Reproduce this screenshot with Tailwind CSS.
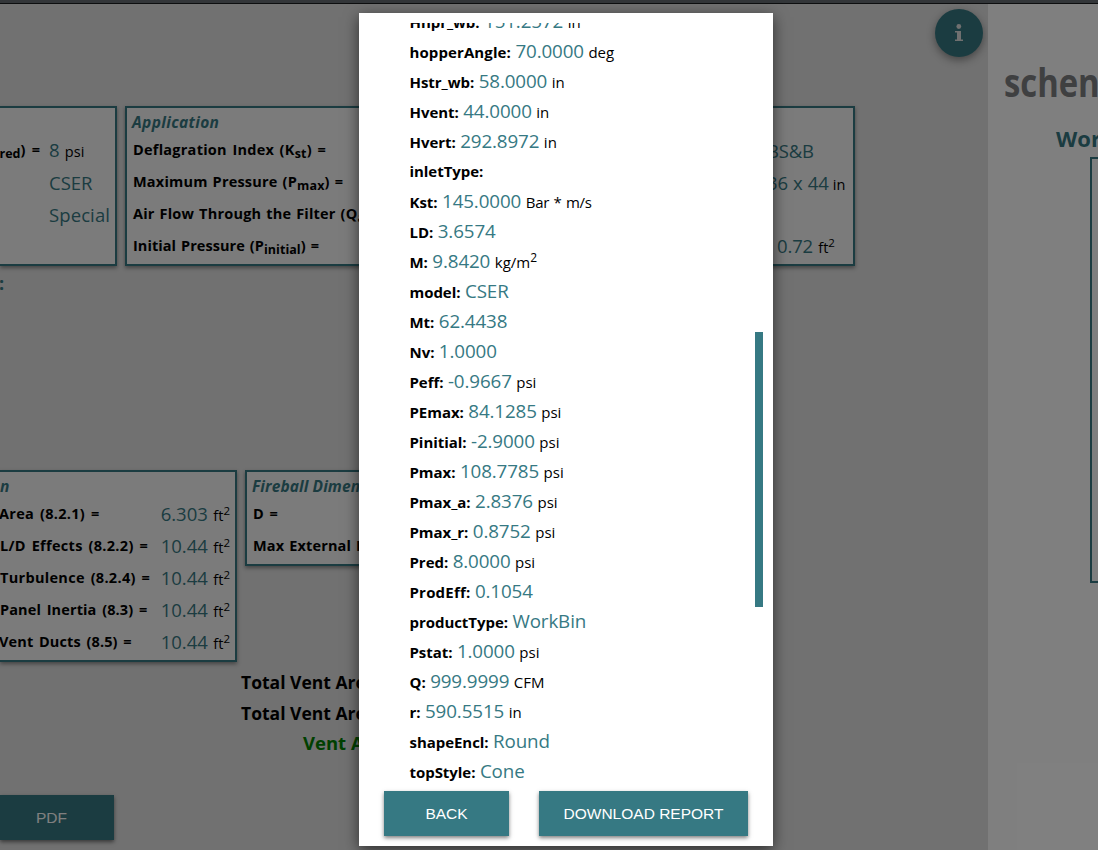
<!DOCTYPE html>
<html lang="en">
<head>
<meta charset="utf-8">
<title>Vent Report</title>
<script src="https://cdn.jsdelivr.net/npm/@tailwindcss/browser@4"></script>
</head>
<body class="relative h-[850px] w-[1098px] overflow-hidden bg-[#e2e2e2] font-['Open_Sans','Noto_Sans',sans-serif] text-black">
<div class="h-1 border-b border-[#1b1d1e] bg-[#666d73]"></div>
<div class="flex h-[846px]">
  <main class="relative w-[988px] shrink-0 overflow-hidden">
    <button class="absolute top-[5px] left-[935px] flex size-12 items-center justify-center rounded-full bg-[#367983] shadow-[0_3px_8px_rgba(0,0,0,0.4)]">
      <svg width="10" height="18" viewBox="0 0 10 18" fill="#e0e0e0"><circle cx="4.8" cy="2.5" r="2.4"/><path d="M1 7h6v8.600h2V17H1v-1.400h2V8.400H1z"/></svg>
    </button>
    <section class="flex gap-2 pt-[102px] text-[14.5px] font-bold whitespace-nowrap">
      <div class="flex h-40 w-[117px] shrink-0 justify-end border-2 border-l-0 border-[#367983] bg-[#f6f6f6] pr-1 pt-[26px] shadow-[0_2px_4px_rgba(0,0,0,0.4)]">
        <div class="mr-[9px] h-8 shrink-0 leading-8 [word-spacing:2.500px]">(P<sub class="text-[12.500px]">red</sub>) =</div>
        <div class="w-[62px] shrink-0 font-normal leading-8 *:h-8 [&_span]:text-[18.500px] [&_span]:text-[#367983]">
          <div class="[word-spacing:1.500px]"><span>8</span> psi</div>
          <div class="pt-px"><span>CSER</span></div>
          <div class="pt-px"><span class="tracking-[0.1px]">Special</span></div>
        </div>
      </div>
      <div class="h-40 w-[355px] shrink-0 border-2 border-[#367983] bg-[#f6f6f6] pl-[6px] shadow-[0_2px_4px_rgba(0,0,0,0.4)]">
        <h2 class="-ml-px h-[26px] text-[15.500px] leading-[29px] italic tracking-[0.350px] text-[#367983]">Application</h2>
        <div class="h-8 leading-8 tracking-[0.250px] [word-spacing:1.500px]">Deflagration Index (K<sub class="text-[12.500px]">st</sub>) =</div>
        <div class="h-8 leading-8 tracking-[0.200px] [word-spacing:1px]">Maximum Pressure (P<sub class="text-[12.500px]">max</sub>) =</div>
        <div class="h-8 leading-8 tracking-[0.200px] [word-spacing:1px]">Air Flow Through the Filter (Q<sub class="text-[12.500px]">air</sub>) =</div>
        <div class="h-8 leading-8 tracking-[0.050px] [word-spacing:1.200px]">Initial Pressure (P<sub class="text-[12.500px]">initial</sub>) =</div>
      </div>
      <div class="flex h-40 w-[367px] shrink-0 justify-end border-2 border-[#367983] bg-[#f6f6f6] pt-[26px] font-normal shadow-[0_2px_4px_rgba(0,0,0,0.4)]">
        <div class="w-[86px] leading-8 *:h-8 [&_span]:text-[18.500px] [&_span]:tracking-[-0.150px] [&_span]:text-[#367983]">
          <div class="pt-px"><span>BS&amp;B</span></div>
          <div class="pt-px [word-spacing:0.500px]"><span>36 x 44</span> in</div>
          <div></div>
          <div class="pl-[10px] [word-spacing:1.500px]"><span>0.72</span> ft<sup class="text-[11.500px]">2</sup></div>
        </div>
      </div>
    </section>
    <div class="-ml-px h-[204px] pt-1 text-[18px] font-bold text-[#367983]">:</div>
    <section class="flex h-[192px] items-start gap-2 text-[14.5px] font-bold whitespace-nowrap">
      <div class="h-48 w-[237px] shrink-0 border-2 border-l-0 border-[#367983] bg-[#f6f6f6] pr-[5px] shadow-[0_2px_4px_rgba(0,0,0,0.4)]">
        <h2 class="h-[26px] text-[15.500px] leading-[29px] italic text-[#367983]">n</h2>
        <div class="tracking-[0.300px] [word-spacing:1.800px] *:flex *:h-8 *:justify-between *:leading-8 [&_em]:font-normal [&_em]:not-italic [&_em]:tracking-normal [&_i]:text-[18.500px] [&_i]:text-[#367983] [&_i]:not-italic [&_sup]:text-[11.500px]">
          <div><span class="-ml-px">Area (8.2.1) =</span><em><i>6.303</i> ft<sup>2</sup></em></div>
          <div><span>L/D Effects (8.2.2) =</span><em><i>10.44</i> ft<sup>2</sup></em></div>
          <div><span>Turbulence (8.2.4) =</span><em><i>10.44</i> ft<sup>2</sup></em></div>
          <div><span class="tracking-[0.120px]">Panel Inertia (8.3) =</span><em><i>10.44</i> ft<sup>2</sup></em></div>
          <div><span class="-ml-px tracking-[0.120px]">Vent Ducts (8.5) =</span><em><i>10.44</i> ft<sup>2</sup></em></div>
        </div>
      </div>
      <div class="h-24 w-[355px] shrink-0 border-2 border-[#367983] bg-[#f6f6f6] pl-[6px] shadow-[0_2px_4px_rgba(0,0,0,0.4)]">
        <h2 class="-ml-px h-[26px] text-[15.500px] leading-[29px] italic tracking-[0.1px] text-[#367983]">Fireball Dimensions</h2>
        <div class="h-8 leading-8 [word-spacing:2px]">D =</div>
        <div class="h-8 leading-8 tracking-[0.150px] [word-spacing:1px]">Max External Pressure =</div>
      </div>
    </section>
    <section class="pt-[5px] pl-[241px] text-[17.500px] leading-[31px] font-bold whitespace-nowrap">
      <div>Total Vent Area Required =</div>
      <div>Total Vent Area Available =</div>
      <div class="-mt-px pl-[62px] text-[18.500px] leading-[29px] text-[green]">Vent Area OK</div>
    </section>
    <button class="mt-[38px] flex h-[45px] w-[114px] items-center bg-[#367983] pl-9 font-['Liberation_Sans',sans-serif] text-[15.500px] text-white shadow-[0_2px_4px_rgba(0,0,0,0.5)]">PDF</button>
  </main>
  <aside class="w-[110px] shrink-0 overflow-hidden bg-white whitespace-nowrap">
    <div class="mt-[53px] ml-[16px] h-[61px] origin-left scale-x-[0.82] text-[40px] leading-[50px] font-bold text-[#7e8083]">schenck</div>
    <div class="ml-[68px] h-[39px] text-[22px] leading-[40px] font-bold text-[#367983]">WorkBin</div>
    <div class="ml-[102px] h-[426px] w-40 border-2 border-[#367983]"></div>
  </aside>
</div>

<div class="absolute inset-0 bg-black/50">
  <div class="absolute top-[13px] left-[359px] h-[833px] w-[414px] bg-white pt-[10px] shadow-[0_4px_14px_rgba(0,0,0,0.6)]">
    <div class="relative h-[763px] overflow-hidden pl-[50.5px]">
      <div class="-mt-[17px] text-[15px] leading-[30px] whitespace-nowrap [word-spacing:0.600px] *:h-[30px] [&_b]:tracking-[-0.050px] [&_i]:text-[18.800px] [&_i]:tracking-[-0.120px] [&_i]:text-[#367983] [&_i]:not-italic [&_sup]:text-[12px]">
        <p><b>Hhpr_wb:</b> <i>151.2572</i> in</p>
        <p><b class="tracking-[0.100px]!">hopperAngle:</b> <i>70.0000</i> deg</p>
        <p><b>Hstr_wb:</b> <i>58.0000</i> in</p>
        <p><b>Hvent:</b> <i>44.0000</i> in</p>
        <p><b>Hvert:</b> <i>292.8972</i> in</p>
        <p><b>inletType:</b></p>
        <p><b>Kst:</b> <i>145.0000</i> <span class="tracking-[-0.200px]">Bar * m/s</span></p>
        <p><b>LD:</b> <i>3.6574</i></p>
        <p><b>M:</b> <i>9.8420</i> kg/m<sup>2</sup></p>
        <p><b>model:</b> <i>CSER</i></p>
        <p><b>Mt:</b> <i>62.4438</i></p>
        <p><b>Nv:</b> <i>1.0000</i></p>
        <p><b>Peff:</b> <i>-0.9667</i> psi</p>
        <p><b>PEmax:</b> <i>84.1285</i> psi</p>
        <p><b>Pinitial:</b> <i>-2.9000</i> psi</p>
        <p><b>Pmax:</b> <i>108.7785</i> psi</p>
        <p><b>Pmax_a:</b> <i>2.8376</i> psi</p>
        <p><b>Pmax_r:</b> <i>0.8752</i> psi</p>
        <p><b>Pred:</b> <i>8.0000</i> psi</p>
        <p><b class="tracking-[0.200px]!">ProdEff:</b> <i>0.1054</i></p>
        <p><b>productType:</b> <i>WorkBin</i></p>
        <p><b>Pstat:</b> <i>1.0000</i> psi</p>
        <p><b>Q:</b> <i>999.9999</i> CFM</p>
        <p><b>r:</b> <i>590.5515</i> in</p>
        <p><b>shapeEncl:</b> <i>Round</i></p>
        <p><b>topStyle:</b> <i>Cone</i></p>
      </div>
      <div class="absolute top-[309px] right-[10px] h-[275px] w-2 bg-[#367983]"></div>
    </div>
    <div class="flex gap-[30px] pt-[5px] pl-[25px] font-['Liberation_Sans',sans-serif] text-[15.500px] text-white">
      <button class="h-[45px] w-[125px] bg-[#367983] shadow-[0_2px_4px_rgba(0,0,0,0.5)]">BACK</button>
      <button class="h-[45px] w-[209px] bg-[#367983] shadow-[0_2px_4px_rgba(0,0,0,0.5)]">DOWNLOAD REPORT</button>
    </div>
  </div>
</div>
</body>
</html>
